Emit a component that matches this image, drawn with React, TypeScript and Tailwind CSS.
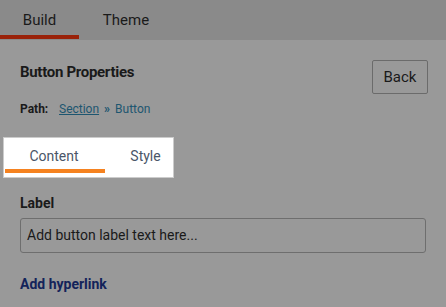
import React from "react"

const App = () => {
  return (
    <div className="w-[446px] h-[307px] overflow-hidden bg-[#999999] font-['Roboto',sans-serif] text-[#1a1a1a]">
      <div className="flex h-[40px] bg-[#8a8a8a]">
        <div className="relative w-[79px] flex items-center justify-center text-[15px]">
          Build
          <div className="absolute left-0 bottom-[1px] h-[4px] w-[79px] bg-[#9a2209]" />
        </div>
        <div className="w-[94px] flex items-center justify-center text-[15px]">Theme</div>
      </div>

      <div className="px-[20px]">
        <div className="flex justify-between pt-[20px]">
          <div>
            <h1 className="text-[15px] font-bold leading-[20px] mt-[2px] tracking-[-0.3px]">Button Properties</h1>
            <div className="flex items-center text-[12px] mt-[18px]">
              <span className="font-bold w-[39px]">Path:</span>
              <a className="underline text-[#1d5670]">Section</a>
              <span className="mx-[5px] text-[#1d5670] font-bold">»</span>
              <span className="text-[#1d5670]">Button</span>
            </div>
          </div>
          <button className="mr-[-2px] h-[34px] w-[56px] border border-[#6b6b6b] rounded-[2px] text-[15px]">Back</button>
        </div>
      </div>

      <div className="ml-[3px] mt-[19px] w-[171px] h-[41px] bg-white border border-[#cccccc] flex relative">
        <div className="w-[100px] flex justify-center pt-[8px] text-[14px] text-[#4a5668]">Content</div>
        <div className="flex-1 flex justify-center pt-[8px] pl-[14px] text-[14px] text-[#4a5668]">Style</div>
        <div className="absolute left-[1px] top-[31px] h-[4px] w-[100px] bg-[#f58220]" />
      </div>

      <div className="px-[20px] mt-[16px]">
        <label className="block text-[14px] font-bold leading-[18px]">Label</label>
        <div className="mt-[6px] h-[35px] border border-[#6e6e6e] rounded-[3px] flex items-center px-[6px] text-[14px]">
          Add button label text here...
        </div>
        <div className="mt-[21px] text-[14px] font-bold text-[#13235a]">Add hyperlink</div>
      </div>
    </div>
  )
}

export default App
